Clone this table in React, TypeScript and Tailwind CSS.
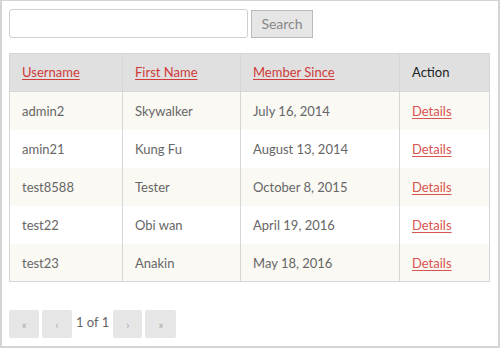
import React from "react";

const rows = [
  ["admin2", "Skywalker", "July 16, 2014"],
  ["amin21", "Kung Fu", "August 13, 2014"],
  ["test8588", "Tester", "October 8, 2015"],
  ["test22", "Obi wan", "April 19, 2016"],
  ["test23", "Anakin", "May 18, 2016"],
];

export default function App() {
  const pg =
    "h-[28px] bg-[#e6e6e6] rounded-[2px] flex items-center justify-center pt-[3px] text-[11px] text-[#aaa]";
  return (
    <div
      className="w-[500px] h-[348px] bg-white border-x-2 border-b-2 border-t border-[#d4d4d4] pl-[7px] pt-[8px] text-[13px] text-[#666]"
      style={{ fontFamily: "Lato, 'Open Sans', sans-serif" }}
    >
      <div className="flex items-start gap-[3px]">
        <input
          className="w-[239px] h-[29px] border border-[#cfcfcf] rounded-[3px] bg-white outline-none px-2"
          type="text"
        />
        <button className="mt-[1px] w-[62px] h-[28px] bg-[#e6e6e6] border border-[#b9b9b9] text-[#888] text-[14px] leading-none">
          Search
        </button>
      </div>
      <table className="mt-[15px] w-[480px] border-collapse table-fixed border border-[#d6d6d6]">
        <colgroup>
          <col className="w-[113px]" />
          <col className="w-[118px]" />
          <col className="w-[159px]" />
          <col className="w-[90px]" />
        </colgroup>
        <thead>
          <tr className="bg-[#e0e0e0] h-[38px]">
            {["Username", "First Name", "Member Since"].map((h) => (
              <th
                key={h}
                className="border border-[#d6d6d6] px-3 pt-[1px] text-left font-normal"
              >
                <a className="text-[#cf3a3a] underline underline-offset-2" href="#">
                  {h}
                </a>
              </th>
            ))}
            <th className="border border-[#d6d6d6] px-3 pt-[1px] text-left font-normal text-[#222]">
              Action
            </th>
          </tr>
        </thead>
        <tbody>
          {rows.map((r, i) => (
            <tr
              key={r[0]}
              className={`h-[38px] ${i % 2 === 0 ? "bg-[#faf9f4]" : "bg-white"}`}
            >
              {r.map((c, j) => (
                <td key={j} className="border-x border-[#d6d6d6] px-3 pt-[2px]">
                  {c}
                </td>
              ))}
              <td className="border-x border-[#d6d6d6] px-3 pt-[2px]">
                <a className="text-[#d9534f] underline underline-offset-2" href="#">
                  Details
                </a>
              </td>
            </tr>
          ))}
        </tbody>
      </table>
      <div className="mt-[28px] flex items-center gap-[3px]">
        <span className={`w-[30px] ${pg}`}>«</span>
        <span className={`w-[30px] ${pg}`}>‹</span>
        <span className="px-[1px] text-[13px] text-[#666] -mt-[3px]">1 of 1</span>
        <span className={`w-[29px] ${pg}`}>›</span>
        <span className={`w-[31px] ${pg}`}>»</span>
      </div>
    </div>
  );
}
